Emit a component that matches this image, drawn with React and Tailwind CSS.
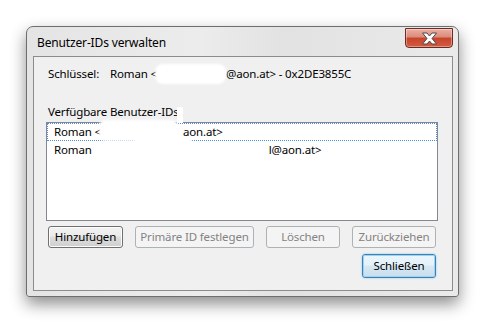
import { useState } from "react";

const font = {
  fontFamily: '"Segoe UI", "Noto Sans", "DejaVu Sans", sans-serif',
  letterSpacing: "-0.15px",
};

function Btn({ children, w, disabled }) {
  let cls =
    "h-[22px] rounded-[3px] border text-[11.5px] leading-none flex items-center justify-center whitespace-nowrap ";
  if (disabled) {
    cls += "border-[#adb2b5] bg-[#f4f4f4] text-[#838383]";
  } else {
    cls +=
      "border-[#707070] text-black bg-[linear-gradient(#f2f2f2_0%,#ebebeb_45%,#dddddd_50%,#cfcfcf_100%)] shadow-[inset_0_0_0_1px_#fcfcfc]";
  }
  return (
    <button className={cls + " " + w} disabled={disabled}>
      {children}
    </button>
  );
}

export default function App() {
  const [sel, setSel] = useState(0);

  return (
    <div className="w-[486px] h-[325px] bg-white pl-[26px] pt-[26px]" style={font}>
      {/* window frame */}
      <div className="w-[433px] h-[271px] rounded-t-[7px] rounded-b-[3px] border border-[#6e6e6e] bg-[linear-gradient(90deg,#e4e4e4,#ececec_40%,#e2e2e2_60%,#eaeaea)] shadow-[0_7px_16px_rgba(0,0,0,0.45)] flex flex-col pl-[6px] pr-[5px] pb-[5px]">
        {/* title bar */}
        <div className="h-[29px] flex items-start justify-between">
          <div className="pt-[7px] pl-[4px] text-[12px] text-black">Benutzer-IDs verwalten</div>
          <div className="mt-[1px] w-[48px] h-[20px] rounded-b-[4px] border border-[#6d2a20] bg-[linear-gradient(#eab0a4_0%,#dc8a79_45%,#c7432c_50%,#d35c3f_100%)] shadow-[inset_0_0_0_1px_rgba(255,255,255,0.35)] flex items-center justify-center">
            <svg width="17" height="13" viewBox="0 0 17 13">
              <path
                d="M1.5 1h4.5l2.5 3L11 1h4.5l-4.5 5.5 4.5 5.5H11l-2.5-3-2.5 3H1.5L6 6.5z"
                fill="#ffffff"
                stroke="#4a4a4a"
                strokeWidth="1"
                strokeLinejoin="round"
              />
            </svg>
          </div>
        </div>

        {/* client area */}
        <div className="flex-1 border border-[#8c8c8c] bg-[#f0f0f0] relative flex flex-col pl-[12px] pr-[14px] text-[11.5px]">
          <div className="h-[34px] flex items-center text-black pl-[2px]">
            <span className="w-[62px]">Schlüssel:</span>
            <span>Roman &lt;</span>
            <span className="inline-block w-[71px] h-[20px] -ml-[2px] bg-white rounded-[8px] blur-[1px]" />
            <span>@aon.at&gt; - 0x2DE3855C</span>
          </div>

          <div className="mt-[10px] h-[21px] flex items-center text-black pl-[2px]">
            Verfügbare Benutzer-IDs:
          </div>

          <div className="h-[99px] border border-[#828790] bg-white text-black">
            <div
              onClick={() => setSel(0)}
              className={
                "h-[18px] flex items-center pl-[6px] " +
                (sel === 0 ? "border border-dotted border-[#4d8fd8]" : "border border-transparent")
              }
            >
              Roman &lt;<span className="inline-block w-[82px]" />aon.at&gt;
            </div>
            <div
              onClick={() => setSel(1)}
              className={
                "h-[18px] flex items-center pl-[6px] " +
                (sel === 1 ? "border border-dotted border-[#4d8fd8]" : "border border-transparent")
              }
            >
              Roman<span className="inline-block w-[177px]" />l@aon.at&gt;
            </div>
          </div>

          {/* redaction smudges */}
          <div className="absolute left-[65px] top-[63px] w-[79px] h-[21px] bg-white rounded-[6px] blur-[1px]" />
          <div className="absolute left-[100px] top-[80px] w-[58px] h-[11px] bg-white rounded-[5px] blur-[1px]" />
          <div className="absolute left-[143px] top-[50px] w-[6px] h-[16px] bg-white blur-[0.5px]" />

          <div className="mt-[5px] flex items-center gap-[12px] pl-[2px]">
            <Btn w="w-[75px]">Hinzufügen</Btn>
            <Btn w="w-[119px]" disabled>
              Primäre ID festlegen
            </Btn>
            <Btn w="w-[74px]" disabled>
              Löschen
            </Btn>
            <Btn w="w-[84px]" disabled>
              Zurückziehen
            </Btn>
          </div>

          <div className="mt-[6px] flex justify-end pr-[2px]">
            <div className="h-[24px] w-[74px] rounded-[3px] border border-[#3c7fb1] shadow-[0_0_2px_#7cc4ef] bg-[linear-gradient(#eaf6fd_0%,#e6f2fa_45%,#d7e8f3_50%,#c8ddec_100%)] flex items-center justify-center text-black">
              <span className="w-full h-full rounded-[2px] border border-[#9ed2f2] flex items-center justify-center">
                Schließen
              </span>
            </div>
          </div>
        </div>
      </div>
    </div>
  );
}
